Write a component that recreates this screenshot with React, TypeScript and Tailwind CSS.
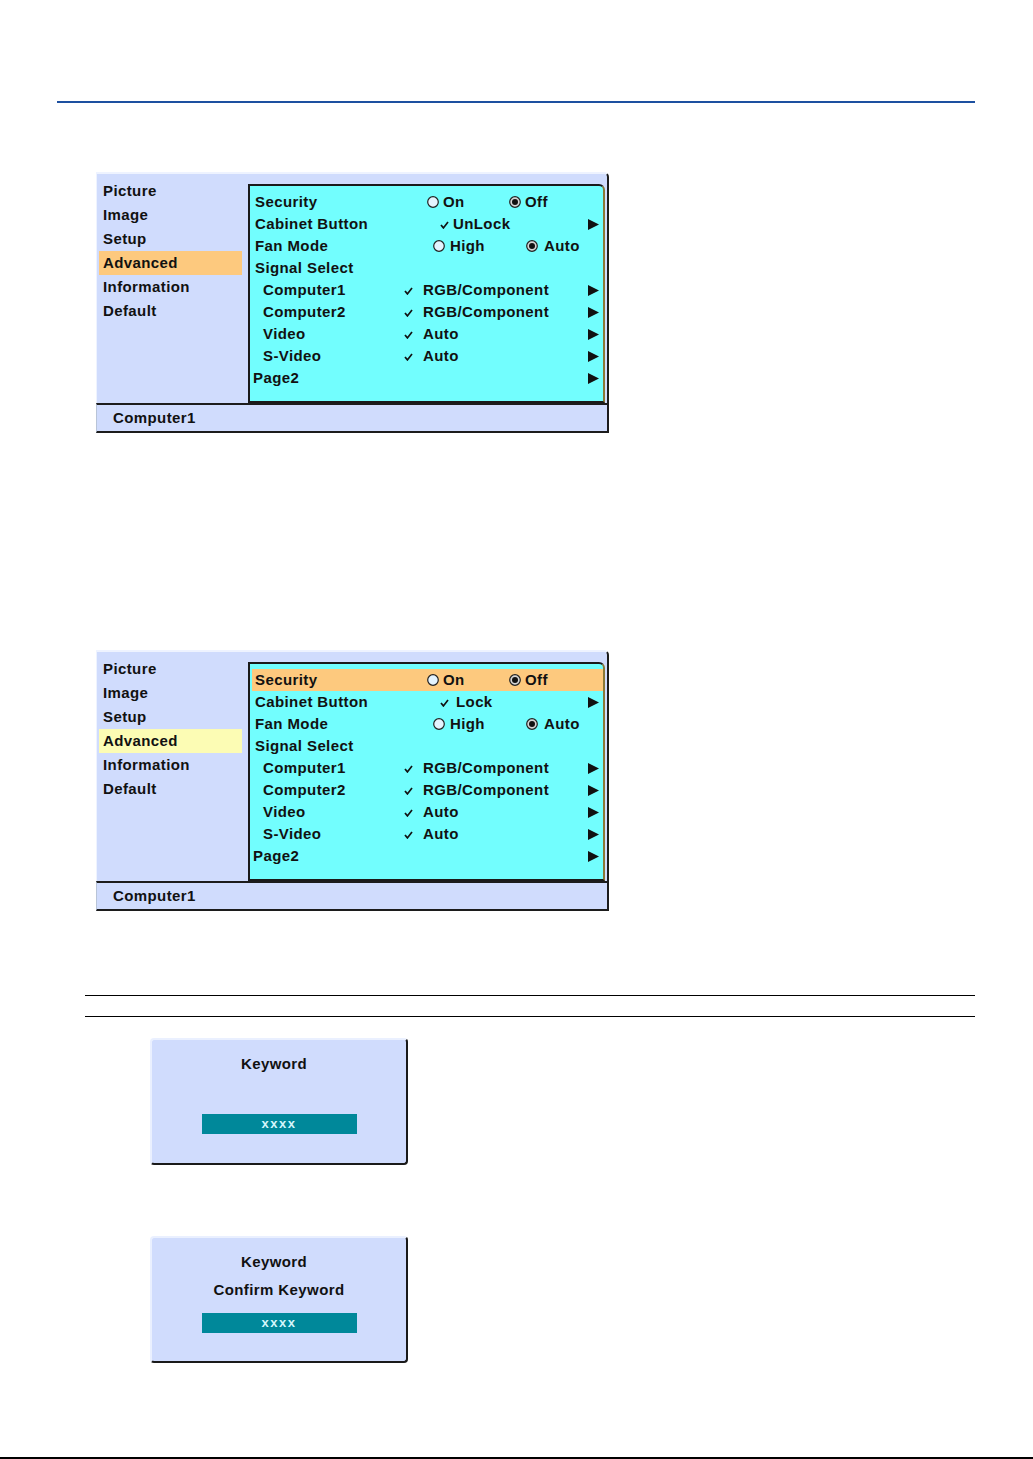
import React from 'react';

const Radio = ({ on }: { on?: boolean }) => (
  <svg width="12" height="12" viewBox="0 0 12 12" className="shrink-0">
    <circle cx="6" cy="6" r="5.3" fill={on ? '#d6d6d6' : '#e4f4ff'} stroke="#222" strokeWidth="1.2" />
    {on && <circle cx="6" cy="6" r="3" fill="#111" />}
  </svg>
);

const Check = () => (
  <svg width="9" height="8" viewBox="0 0 9 8" className="shrink-0 mt-[2px]">
    <path d="M1 4 L3.4 6.9 L8 1" fill="none" stroke="#111" strokeWidth="1.7" />
  </svg>
);

const Arrow = () => (
  <svg width="11" height="11" viewBox="0 0 11 11" className="shrink-0 ml-auto">
    <path d="M0 0 L11 5.5 L0 11 Z" fill="#111" />
  </svg>
);

const leftItems = ['Picture', 'Image', 'Setup', 'Advanced', 'Information', 'Default'];

const signals = [
  { label: 'Computer1', value: 'RGB/Component' },
  { label: 'Computer2', value: 'RGB/Component' },
  { label: 'Video', value: 'Auto' },
  { label: 'S-Video', value: 'Auto' },
];

function AdvancedMenu({ second }: { second?: boolean }) {
  return (
    <div className="ml-[96px] w-[513px]">
      <div className="flex h-[231px] bg-[#d0dcfd] border-t-2 border-l border-[#eef3ff] border-r-2 border-r-[#1c1c1c] rounded-tr-[5px] pr-[2px]">
        {/* left menu */}
        <div className="w-[151px] pt-[5px]">
          {leftItems.map((item) => (
            <div
              key={item}
              className={
                'ml-[2px] w-[143px] h-[24px] pl-[4px] flex items-center ' +
                (item === 'Advanced' ? (second ? 'bg-[#fcfcb4]' : 'bg-[#fdc97e]') : '')
              }
            >
              {item}
            </div>
          ))}
        </div>

        {/* right panel */}
        <div className="mt-[10px] w-[357px] bg-[#72fefe] border-t-2 border-l-2 border-b-2 border-[#1a1a1a] border-r-2 border-r-[#8a7838] rounded-tr-[6px] pt-[5px]">
          <div className={'ml-[2px] h-[22px] pl-[3px] pr-[4px] flex items-center ' + (second ? 'bg-[#fdc97e]' : '')}>
            <span className="w-[172px]">Security</span>
            <span className="w-[82px] flex items-center gap-[4px]">
              <Radio />
              On
            </span>
            <span className="flex items-center gap-[4px]">
              <Radio on />
              Off
            </span>
          </div>

          <div className="ml-[2px] h-[22px] pl-[3px] pr-[4px] flex items-center">
            <span className="w-[185px]">Cabinet Button</span>
            <Check />
            <span className={second ? 'ml-[7px]' : 'ml-[4px]'}>{second ? 'Lock' : 'UnLock'}</span>
            <Arrow />
          </div>

          <div className="ml-[2px] h-[22px] pl-[3px] pr-[4px] flex items-center">
            <span className="w-[178px]">Fan Mode</span>
            <span className="w-[93px] flex items-center gap-[5px]">
              <Radio />
              High
            </span>
            <span className="flex items-center gap-[6px]">
              <Radio on />
              Auto
            </span>
          </div>

          <div className="ml-[2px] h-[22px] pl-[3px] pr-[4px] flex items-center">
            <span>Signal Select</span>
          </div>

          {signals.map((s) => (
            <div key={s.label} className="ml-[2px] h-[22px] pl-[11px] pr-[4px] flex items-center">
              <span className="w-[141px]">{s.label}</span>
              <Check />
              <span className="ml-[10px]">{s.value}</span>
              <Arrow />
            </div>
          ))}

          <div className="ml-[2px] h-[22px] pl-[1px] pr-[4px] flex items-center">
            <span>Page2</span>
            <Arrow />
          </div>
        </div>
      </div>

      {/* status bar */}
      <div className="h-[30px] bg-[#d0dcfd] border-t-2 border-b-2 border-r-2 border-[#1c1c1c] border-l border-l-[#b8c4d8] pl-[16px] flex items-center">
        Computer1
      </div>
    </div>
  );
}

function KeywordBox({ confirm }: { confirm?: boolean }) {
  return (
    <div className="ml-[150px] w-[258px] h-[127px] bg-[#d0dcfd] border-t-2 border-l-2 border-[#eaf0ff] border-r-2 border-b-2 border-r-[#1a1a1a] border-b-[#1a1a1a] rounded-[4px] flex flex-col items-center pt-[13px]">
      <div className="h-[22px] flex items-center pr-[10px]">Keyword</div>
      {confirm && <div className="mt-[6px] h-[22px] flex items-center">Confirm Keyword</div>}
      <div
        className={
          'w-[155px] h-[20px] bg-[#00889a] flex items-center justify-center text-[13px] tracking-[1.5px] text-[#d4f6fc] ' +
          (confirm ? 'mt-[12px]' : 'mt-[39px]')
        }
      >
        xxxx
      </div>
    </div>
  );
}

export default function App() {
  return (
    <div className="w-[1033px] h-[1459px] bg-white flex flex-col text-[#111] text-[15px] font-bold tracking-[0.4px] [font-family:'Liberation_Sans',Arial,sans-serif]">
      <div className="mt-[101px] ml-[57px] w-[918px] h-[2px] bg-[#1d50a0]" />

      <div className="mt-[69px]">
        <AdvancedMenu />
      </div>

      <div className="mt-[217px]">
        <AdvancedMenu second />
      </div>

      <div className="mt-[84px] ml-[85px] w-[890px] h-px bg-black" />
      <div className="mt-[20px] ml-[85px] w-[890px] h-px bg-black" />

      <div className="mt-[21px]">
        <KeywordBox />
      </div>
      <div className="mt-[71px]">
        <KeywordBox confirm />
      </div>

      <div className="mt-auto w-full h-[2px] bg-black" />
    </div>
  );
}
